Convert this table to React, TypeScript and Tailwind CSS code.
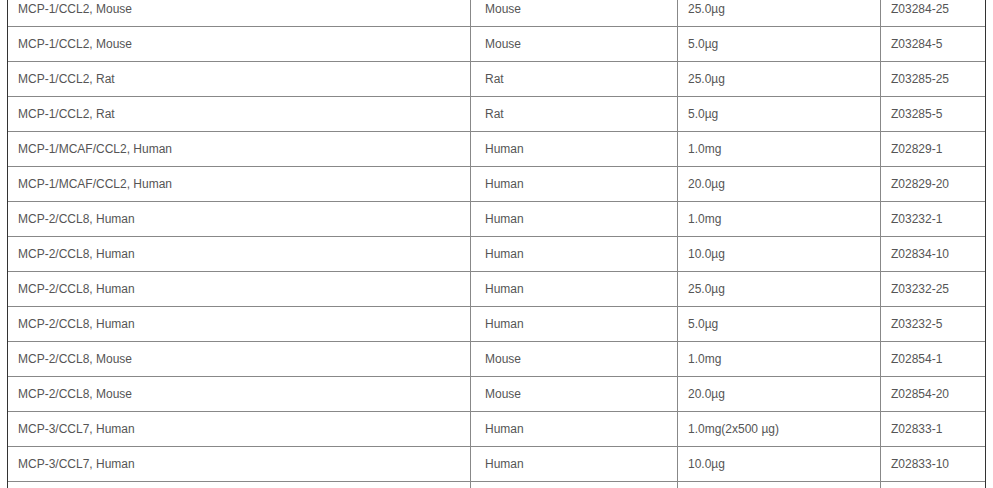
const rows = [
  ["MCP-1/CCL2, Mouse", "Mouse", "25.0µg", "Z03284-25"],
  ["MCP-1/CCL2, Mouse", "Mouse", "5.0µg", "Z03284-5"],
  ["MCP-1/CCL2, Rat", "Rat", "25.0µg", "Z03285-25"],
  ["MCP-1/CCL2, Rat", "Rat", "5.0µg", "Z03285-5"],
  ["MCP-1/MCAF/CCL2, Human", "Human", "1.0mg", "Z02829-1"],
  ["MCP-1/MCAF/CCL2, Human", "Human", "20.0µg", "Z02829-20"],
  ["MCP-2/CCL8, Human", "Human", "1.0mg", "Z03232-1"],
  ["MCP-2/CCL8, Human", "Human", "10.0µg", "Z02834-10"],
  ["MCP-2/CCL8, Human", "Human", "25.0µg", "Z03232-25"],
  ["MCP-2/CCL8, Human", "Human", "5.0µg", "Z03232-5"],
  ["MCP-2/CCL8, Mouse", "Mouse", "1.0mg", "Z02854-1"],
  ["MCP-2/CCL8, Mouse", "Mouse", "20.0µg", "Z02854-20"],
  ["MCP-3/CCL7, Human", "Human", "1.0mg(2x500 µg)", "Z02833-1"],
  ["MCP-3/CCL7, Human", "Human", "10.0µg", "Z02833-10"],
  ["", "", "", ""],
];

export default function App() {
  return (
    <div className="h-[488px] overflow-hidden bg-white font-['Liberation_Sans',Arial,sans-serif] text-[12px] text-[#555]">
      <div className="-mt-[8px] ml-[7px] w-[979px] border-x border-x-[#333]">
        {rows.map((r, i) => (
          <div
            key={i}
            className="grid h-[35px] grid-cols-[463px_207px_203px_106px] border-b border-b-[#888]"
          >
            <div className="flex items-center border-r border-r-[#888] pl-[10px]">{r[0]}</div>
            <div className="flex items-center border-r border-r-[#888] pl-[14px]">{r[1]}</div>
            <div className="flex items-center border-r border-r-[#888] pl-[10px]">{r[2]}</div>
            <div className="flex items-center pl-[10px]">{r[3]}</div>
          </div>
        ))}
      </div>
    </div>
  );
}
